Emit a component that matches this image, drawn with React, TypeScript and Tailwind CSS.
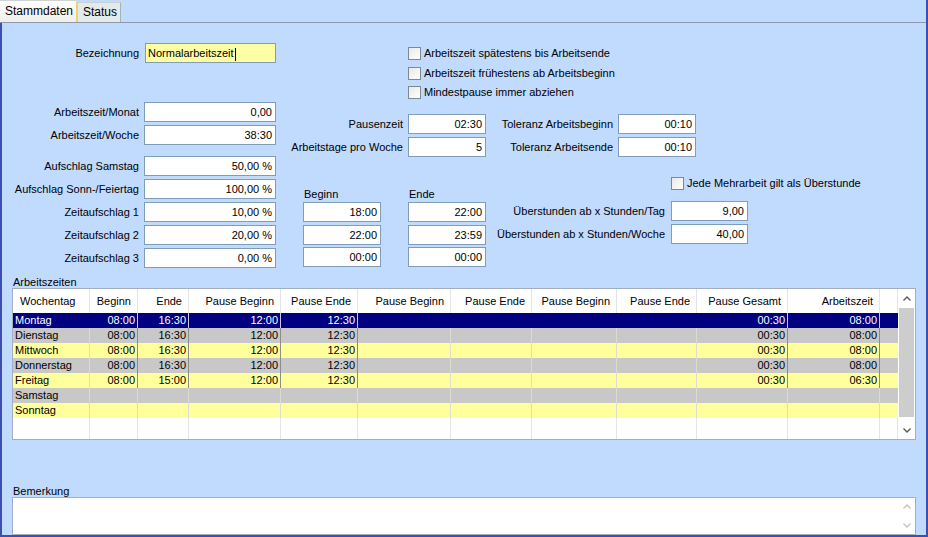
const fieldBase =
  'h-[20px] shrink-0 border border-[#7f9db9] px-[3px] leading-[18px] whitespace-nowrap overflow-hidden';
const field = `${fieldBase} bg-white`;

function Field({ value, className = '' }: { value: string; className?: string }) {
  return <div className={`${field} text-right ${className}`}>{value}</div>;
}

interface RowProps {
  label: string;
  value: string;
  labelCls: string;
  inputCls: string;
  className?: string;
}

function Row({ label, value, labelCls, inputCls, className = '' }: RowProps) {
  return (
    <div className={`flex items-center ${className}`}>
      <div className={`flex shrink-0 justify-end whitespace-nowrap ${labelCls}`}>{label}</div>
      <Field value={value} className={inputCls} />
    </div>
  );
}

function Check({ label, className = '' }: { label: string; className?: string }) {
  return (
    <div className={`flex h-[13px] items-center gap-[3px] whitespace-nowrap ${className}`}>
      <div className="h-[13px] w-[13px] shrink-0 border border-[#7b8898] bg-gradient-to-br from-[#e8e8e4] to-white" />
      <span>{label}</span>
    </div>
  );
}

function Chevron({ up, color }: { up?: boolean; color: string }) {
  return (
    <svg width="8" height="5" viewBox="0 0 8 5">
      <path
        d={up ? 'M0.5 4.5 L4 1 L7.5 4.5' : 'M0.5 0.5 L4 4 L7.5 0.5'}
        fill="none"
        stroke={color}
        strokeWidth="1.4"
      />
    </svg>
  );
}

const columns = [
  { label: 'Wochentag', w: 'w-[77px]', left: true },
  { label: 'Beginn', w: 'w-[48px]' },
  { label: 'Ende', w: 'w-[51px]' },
  { label: 'Pause Beginn', w: 'w-[92px]' },
  { label: 'Pause Ende', w: 'w-[77px]' },
  { label: 'Pause Beginn', w: 'w-[93px]' },
  { label: 'Pause Ende', w: 'w-[81px]' },
  { label: 'Pause Beginn', w: 'w-[85px]' },
  { label: 'Pause Ende', w: 'w-[80px]' },
  { label: 'Pause Gesamt', w: 'w-[91px]' },
  { label: 'Arbeitszeit', w: 'w-[92px]' },
  { label: '', w: 'w-[18px]' },
];

const days: string[][] = [
  ['Montag', '08:00', '16:30', '12:00', '12:30', '', '', '', '', '00:30', '08:00', ''],
  ['Dienstag', '08:00', '16:30', '12:00', '12:30', '', '', '', '', '00:30', '08:00', ''],
  ['Mittwoch', '08:00', '16:30', '12:00', '12:30', '', '', '', '', '00:30', '08:00', ''],
  ['Donnerstag', '08:00', '16:30', '12:00', '12:30', '', '', '', '', '00:30', '08:00', ''],
  ['Freitag', '08:00', '15:00', '12:00', '12:30', '', '', '', '', '00:30', '06:30', ''],
  ['Samstag', '', '', '', '', '', '', '', '', '', '', ''],
  ['Sonntag', '', '', '', '', '', '', '', '', '', '', ''],
];

function rowBg(i: number) {
  if (i === 0) return 'bg-[#000080] text-white';
  return i % 2 === 1 ? 'bg-[#c8c8c8] text-black' : 'bg-[#ffff9c] text-black';
}

function cellBorder(i: number, c: number, value: string) {
  if (c === columns.length - 1) return 'border-r-0';
  const numeric = c > 0 && value !== '';
  if (i === 0) return numeric ? 'border-r-[#c8c8f0]' : 'border-r-[#000080]';
  return numeric ? 'border-r-[#8c8c8c]' : 'border-r-[#dcdcd0]';
}

function WorkTable() {
  return (
    <div className="flex h-[152px] w-[904px] border border-[#a3afc0] bg-white">
      <div className="flex w-[885px] flex-col">
        {/* header */}
        <div className="flex h-[24px] shrink-0">
          {columns.map((col, c) => (
            <div
              key={c}
              className={`flex h-full items-center whitespace-nowrap border-r border-[#e4e4e4] ${col.w} ${
                col.left ? 'justify-start pl-[7px]' : 'justify-end pr-[6px]'
              }`}
            >
              {col.label}
            </div>
          ))}
        </div>

        {/* rows */}
        {days.map((row, i) => (
          <div key={i} className={`flex h-[15px] shrink-0 ${rowBg(i)}`}>
            {row.map((v, c) => (
              <div
                key={c}
                className={`flex h-full items-center whitespace-nowrap border-r px-[2px] leading-[15px] ${
                  columns[c].w
                } ${c === 0 ? 'justify-start' : 'justify-end'} ${cellBorder(i, c, v)}`}
              >
                {v}
              </div>
            ))}
          </div>
        ))}

        {/* empty filler */}
        <div className="flex flex-1">
          {columns.map((col, c) => (
            <div key={c} className={`h-full border-r border-[#e4e4e4] ${col.w}`} />
          ))}
        </div>
      </div>

      {/* scrollbar */}
      <div className="flex w-[17px] flex-col bg-white">
        <div className="flex h-[18px] items-center justify-center">
          <Chevron up color="#5a5a5a" />
        </div>
        <div className="mx-[1px] mt-[1px] h-[109px] bg-[#cdcdcd]" />
        <div className="flex-1" />
        <div className="flex h-[18px] items-center justify-center">
          <Chevron color="#5a5a5a" />
        </div>
      </div>
    </div>
  );
}

export default function App() {
  return (
    <div className="flex h-[537px] w-[928px] flex-col border-r-2 border-[#3c50b4] bg-[#c1dbfe] font-['Liberation_Sans',Arial,sans-serif] text-[11px] leading-[13px] text-black">
      {/* tabs */}
      <div className="flex h-[22px] shrink-0 items-end">
        <div className="flex h-[22px] w-[76px] items-center border-t border-[#cfd3d6] bg-gradient-to-b from-white to-[#eeeeea] pl-[5px] text-[12px]">
          Stammdaten
        </div>
        <div className="flex h-[20px] w-[45px] items-center border-l-2 border-r border-t border-l-[#f3cf70] border-r-[#a8b2ba] border-t-[#c8d0d4] bg-[#e2eaec] pl-[5px] text-[12px]">
          Status
        </div>
      </div>
      <div className="h-px shrink-0 bg-[#8d98ad]" />

      <div className="flex flex-1 flex-col border-b-2 border-l-2 border-[#3c50b4]">
        {/* form */}
        <div className="flex shrink-0">
          {/* left column */}
          <div className="flex w-[274px] shrink-0 flex-col">
            <div className="mt-[20px] flex items-center">
              <div className="flex w-[143px] shrink-0 justify-end pr-[6px]">Bezeichnung</div>
              <div className={`${fieldBase} w-[131px] bg-[#ffffa4] pl-[2px] text-left`}>
                Normalarbeitszeit
                <span className="ml-px inline-block h-[13px] w-px bg-black align-middle" />
              </div>
            </div>
            <Row className="mt-[39px]" label="Arbeitszeit/Monat" value="0,00" labelCls="w-[142px] pr-[5px]" inputCls="w-[132px]" />
            <Row className="mt-[3px]" label="Arbeitszeit/Woche" value="38:30" labelCls="w-[142px] pr-[5px]" inputCls="w-[132px]" />
            <Row className="mt-[11px]" label="Aufschlag Samstag" value="50,00 %" labelCls="w-[142px] pr-[5px]" inputCls="w-[132px]" />
            <Row className="mt-[3px]" label="Aufschlag Sonn-/Feiertag" value="100,00 %" labelCls="w-[142px] pr-[5px]" inputCls="w-[132px]" />
            <Row className="mt-[3px]" label="Zeitaufschlag 1" value="10,00 %" labelCls="w-[142px] pr-[5px]" inputCls="w-[132px]" />
            <Row className="mt-[3px]" label="Zeitaufschlag 2" value="20,00 %" labelCls="w-[142px] pr-[5px]" inputCls="w-[132px]" />
            <Row className="mt-[3px]" label="Zeitaufschlag 3" value="0,00 %" labelCls="w-[142px] pr-[5px]" inputCls="w-[132px]" />
          </div>

          {/* middle column */}
          <div className="flex w-[210px] shrink-0 flex-col">
            <div className="ml-[132px] mt-[24px] flex flex-col">
              <Check label="Arbeitszeit spätestens bis Arbeitsende" />
              <Check className="mt-[7px]" label="Arbeitszeit frühestens ab Arbeitsbeginn" />
              <Check className="mt-[6px]" label="Mindestpause immer abziehen" />
            </div>
            <Row className="mt-[15px]" label="Pausenzeit" value="02:30" labelCls="w-[132px] pr-[5px]" inputCls="w-[78px]" />
            <Row className="mt-[3px]" label="Arbeitstage pro Woche" value="5" labelCls="w-[132px] pr-[5px]" inputCls="w-[78px]" />
            <div className="ml-[27px] mt-[31px] flex gap-[27px]">
              {[
                ['Beginn', '18:00', '22:00', '00:00'],
                ['Ende', '22:00', '23:59', '00:00'],
              ].map(([title, a, b, c]) => (
                <div key={title} className="flex w-[78px] flex-col">
                  <div className="h-[13px] pl-px">{title}</div>
                  <Field className="mt-px" value={a} />
                  <Field className="mt-[3px]" value={b} />
                  <Field className="mt-[2px]" value={c} />
                </div>
              ))}
            </div>
          </div>

          {/* right column */}
          <div className="flex w-[270px] shrink-0 flex-col">
            <Row className="mt-[91px]" label="Toleranz Arbeitsbeginn" value="00:10" labelCls="w-[132px] pr-[5px]" inputCls="w-[78px]" />
            <Row className="mt-[3px]" label="Toleranz Arbeitsende" value="00:10" labelCls="w-[132px] pr-[5px]" inputCls="w-[78px]" />
            <Check className="ml-[185px] mt-[20px]" label="Jede Mehrarbeit gilt als Überstunde" />
            <Row className="mt-[11px]" label="Überstunden ab x Stunden/Tag" value="9,00" labelCls="w-[185px] pr-[6px]" inputCls="w-[77px]" />
            <Row className="mt-[3px]" label="Überstunden ab x Stunden/Woche" value="40,00" labelCls="w-[185px] pr-[6px]" inputCls="w-[77px]" />
          </div>
        </div>

        {/* Arbeitszeiten */}
        <div className="flex flex-col px-[10px]">
          <div className="mt-[8px] h-[12px] pl-px leading-[12px]">Arbeitszeiten</div>
          <WorkTable />

          <div className="mt-[45px] h-[12px] pl-px leading-[12px]">Bemerkung</div>
          <div className="flex h-[38px] w-[904px] justify-end border border-[#a3afc0] bg-white">
            <div className="flex w-[17px] flex-col items-center justify-between py-[6px]">
              <Chevron up color="#c4c4c4" />
              <Chevron color="#c4c4c4" />
            </div>
          </div>
        </div>
      </div>
    </div>
  );
}
